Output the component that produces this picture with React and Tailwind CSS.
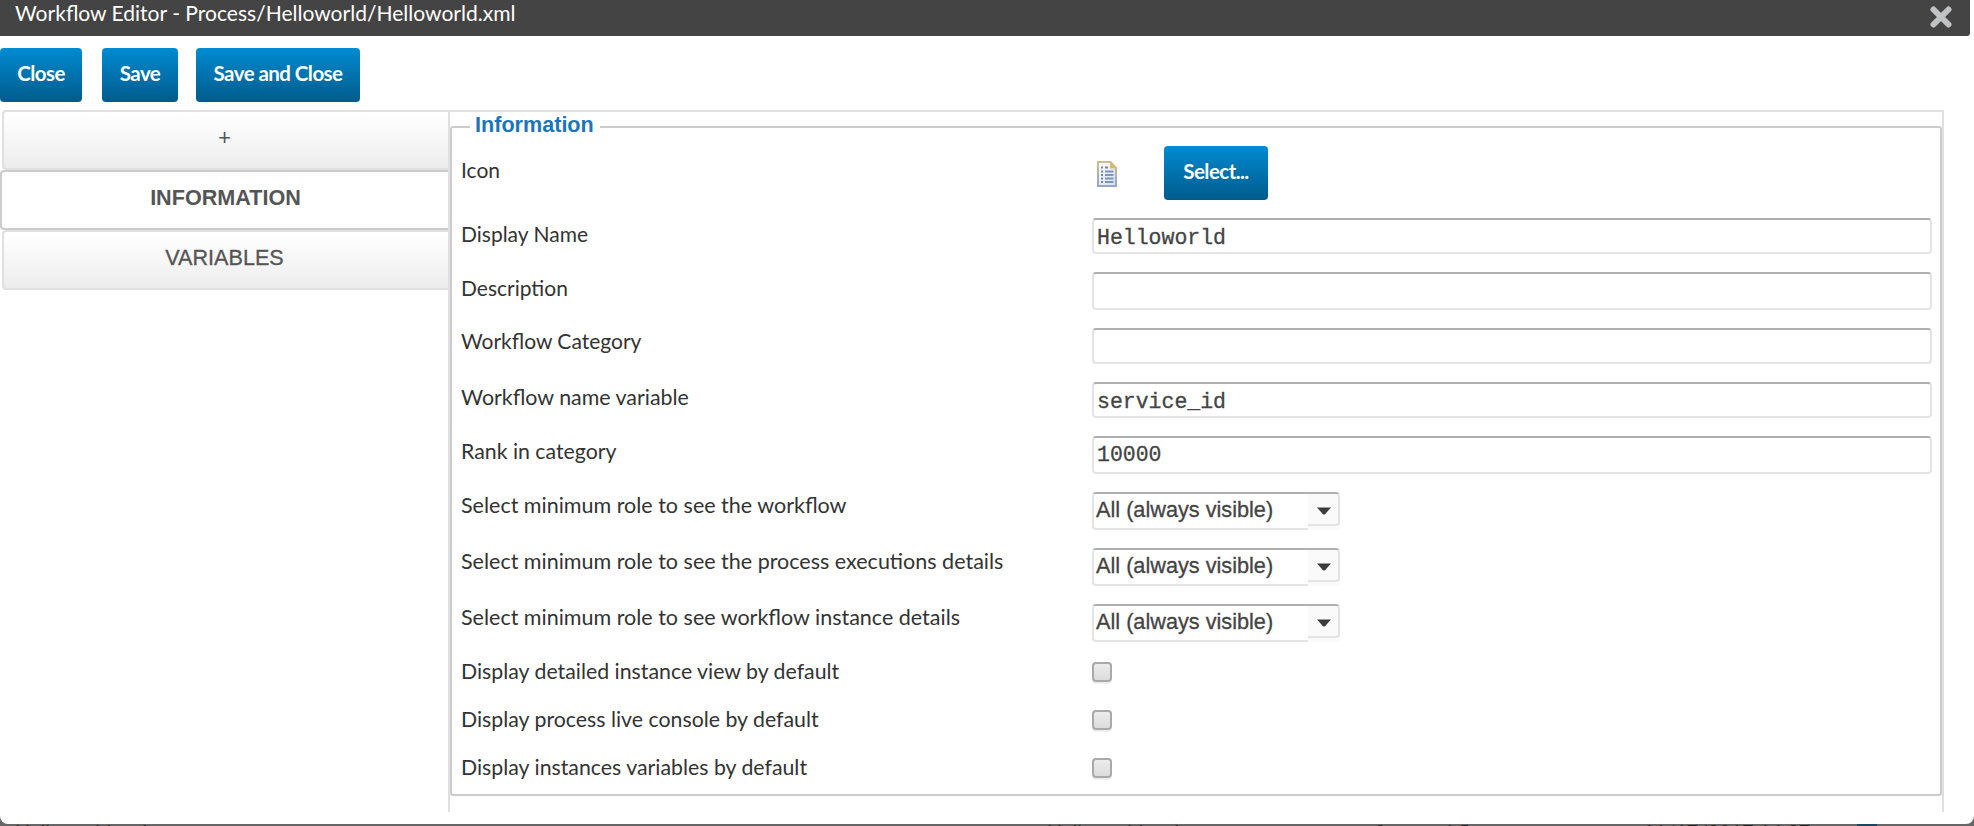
import React from "react";

const rows = [
  { label: "Display Name", kind: "text", value: "Helloworld", row: "h-[54px]", pad: "pt-1 text-[21px]", box: "h-9 pt-[3px]" },
  { label: "Description", kind: "text", value: "", row: "h-[56px]", pad: "pt-1 text-[21px]", box: "h-[38px]" },
  { label: "Workflow Category", kind: "text", value: "", row: "h-[54px]", pad: "pt-px text-[21px]", box: "h-9" },
  { label: "Workflow name variable", kind: "text", value: "service_id", row: "h-[54px]", pad: "pt-[3px] text-[21.4px]", box: "h-9 pt-[3px]" },
  { label: "Rank in category", kind: "text", value: "10000", row: "h-[56px]", pad: "pt-[3px] text-[21.3px]", box: "h-[38px]" },
  { label: "Select minimum role to see the workflow", kind: "select", row: "h-[56px]", pad: "pt-px text-[21.5px]" },
  { label: "Select minimum role to see the process executions details", kind: "select", row: "h-[56px]", pad: "pt-px text-[21.5px]" },
  { label: "Select minimum role to see workflow instance details", kind: "select", row: "h-[56px]", pad: "pt-px text-[21.5px]" },
  { label: "Display detailed instance view by default", kind: "check", row: "h-12", pad: "-mt-px text-[21.3px]" },
  { label: "Display process live console by default", kind: "check", row: "h-12", pad: "-mt-px text-[21.3px]" },
  { label: "Display instances variables by default", kind: "check", row: "h-[38px]", pad: "-mt-px text-[21.3px]" },
];

function Button({ children, className }) {
  return (
    <button
      className={`flex h-[54px] items-center justify-center rounded-[4px] bg-gradient-to-b from-[#008bd2] to-[#005b8c] pb-1 font-['Lato',sans-serif] text-[20.5px] font-bold tracking-[-0.55px] whitespace-nowrap text-white ${className}`}
    >
      {children}
    </button>
  );
}

function Label({ children, pad }) {
  return (
    <div className={`w-[631px] shrink-0 font-['Lato',sans-serif] leading-6 whitespace-nowrap text-[#333] ${pad}`}>
      {children}
    </div>
  );
}

function TextBox({ value, box }) {
  return (
    <div
      className={`flex w-[840px] items-center rounded-[4px] border-2 border-[#e4e4e4] border-t-[#b0b0b0] bg-white pl-[3px] font-['Liberation_Mono',monospace] text-[21.5px] leading-6 text-[#444] [-webkit-text-stroke:0.3px_#444] ${box}`}
    >
      {value}
    </div>
  );
}

function SelectBox() {
  return (
    <div className="flex h-[38px] w-[248px] bg-[#fafafa]">
      <div className="flex w-[216px] items-center rounded-l-[4px] border-2 border-r-0 border-[#e4e4e4] border-t-[#b0b0b0] bg-white pb-0.5 pl-0.5 font-['Liberation_Sans',Arial,sans-serif] text-[21.7px] leading-6 whitespace-nowrap text-[#444] [-webkit-text-stroke:0.3px_#444]">
        All (always visible)
      </div>
      <div className="flex h-[34px] w-8 items-center justify-center rounded-r-[4px] border-2 border-l-0 border-[#e4e4e4] border-t-[#b0b0b0] bg-[#fafafa]">
        <svg width="14" height="8" viewBox="0 0 14 8" className="mt-1 ml-0.5">
          <path d="M0 0.5H14L8 7.2Q7 8 6 7.2Z" fill="#3c3c3c" />
        </svg>
      </div>
    </div>
  );
}

function CheckBox() {
  return (
    <div className="mt-0.5 h-5 w-5 rounded-[4px] border-2 border-[#a9a9a9] bg-gradient-to-b from-[#ececec] to-[#dcdcdc] shadow-[0_2px_1px_rgba(0,0,0,0.07)]" />
  );
}

function PageIcon() {
  return (
    <svg width="20" height="26" viewBox="0 0 20 26">
      <defs>
        <linearGradient id="edge" x1="0" y1="0" x2="0" y2="1">
          <stop offset="0" stopColor="#cdbf8c" />
          <stop offset="1" stopColor="#94a5c9" />
        </linearGradient>
        <linearGradient id="sheet" x1="0" y1="0" x2="1" y2="1">
          <stop offset="0" stopColor="#ffffff" />
          <stop offset="1" stopColor="#d3def2" />
        </linearGradient>
      </defs>
      <path d="M1 1H13.5L19 7V25H1Z" fill="url(#sheet)" stroke="url(#edge)" strokeWidth="2" />
      <path d="M13 1L19 7.5H13Z" fill="#dcb868" />
      <path d="M4 6.5h2M8 6.5h3M4 10.5h2M4 14h2M4 17.500h2M4 21h2" stroke="#6f86b8" strokeWidth="1.8" />
      <path d="M8 10.5h8.500M8 14h8.500M8 17.500h8.500M8 21h8.500" stroke="#7f94c0" strokeWidth="1.9" />
    </svg>
  );
}

export default function App() {
  return (
    <div className="h-[826px] w-[1974px] overflow-hidden bg-[#666]">
      <div className="flex h-[824px] flex-col rounded-b-[8px] bg-white">
        <header className="flex h-9 w-[1970px] justify-between rounded-br-[3px] bg-[#444] pr-[18px] pl-[15px]">
          <h1 className="font-['Lato',sans-serif] text-[21.05px] leading-[26px] whitespace-nowrap text-white">
            Workflow Editor - Process/Helloworld/Helloworld.xml
          </h1>
          <svg width="22" height="22" viewBox="0 0 22 22" className="mt-1.5">
            <path d="M3.500 3.500L18.500 18.500M18.500 3.500L3.500 18.500" stroke="#c0c3c4" strokeWidth="6" strokeLinecap="round" />
          </svg>
        </header>

        <div className="flex h-[74px] pt-3">
          <Button className="w-[82px]">Close</Button>
          <Button className="ml-5 w-[76px]">Save</Button>
          <Button className="ml-[18px] w-[164px]">Save and Close</Button>
        </div>

        <div className="flex">
          <nav className="flex w-[448px] flex-col font-['Liberation_Sans',Arial,sans-serif] text-[21.6px] text-[#555]">
            <div className="ml-0.5 flex h-[60px] items-center justify-center rounded-l-[4px] border-2 border-r-0 border-[#e0e0e0] bg-gradient-to-b from-white via-[#f7f7f7] to-[#ececec] pr-[3px] pb-1">+</div>
            <div className="-mr-0.5 flex h-[60px] items-center justify-center rounded-l-[4px] border-2 border-r-0 border-[#ccc] bg-white pr-px pb-1 font-bold">INFORMATION</div>
            <div className="ml-0.5 flex h-[60px] items-center justify-center rounded-l-[4px] border-2 border-r-0 border-[#e0e0e0] bg-gradient-to-b from-white via-[#f7f7f7] to-[#ececec] pr-[3px] pb-1 [-webkit-text-stroke:0.3px_#555]">VARIABLES</div>
          </nav>

          <main className="h-[702px] w-[1496px] border-2 border-b-0 border-[#e0e0e0] pt-[14px]">
            <section className="h-[670px] rounded-[3px] border-2 border-[#ccc] pl-[9px]">
              <h2 className="-mt-4 ml-[9px] h-[26px] w-[130px] bg-white pl-[5px] font-['Liberation_Sans',Arial,sans-serif] text-[21.6px] leading-[26px] font-bold text-[#1c75bc]">
                Information
              </h2>
              <div className="mt-2 flex h-[72px]">
                <Label pad="pt-3 text-[21px]">Icon</Label>
                <div className="flex w-[72px] pt-[15px] pl-[5px]">
                  <PageIcon />
                </div>
                <Button className="w-[104px]">Select...</Button>
              </div>
              {rows.map((r) => (
                <div key={r.label} className={`flex items-start ${r.row}`}>
                  <Label pad={r.pad}>{r.label}</Label>
                  {r.kind === "text" && <TextBox value={r.value} box={r.box} />}
                  {r.kind === "select" && <SelectBox />}
                  {r.kind === "check" && <CheckBox />}
                </div>
              ))}
            </section>
          </main>
        </div>
      </div>

      <div className="flex h-0.5 overflow-hidden pl-[15px] font-['Lato',sans-serif] text-[20px] leading-[14px] whitespace-nowrap text-[#222]">
        <span className="w-[1032px]">Helloworld.xml</span>
        <span className="w-[296px]">Helloworld.xml</span>
        <span className="w-[300px]">my first workflow</span>
        <span className="w-[214px]">11/17/2017 14:27</span>
        <span className="h-0.5 w-5 bg-[#1d4560]" />
      </div>
    </div>
  );
}
